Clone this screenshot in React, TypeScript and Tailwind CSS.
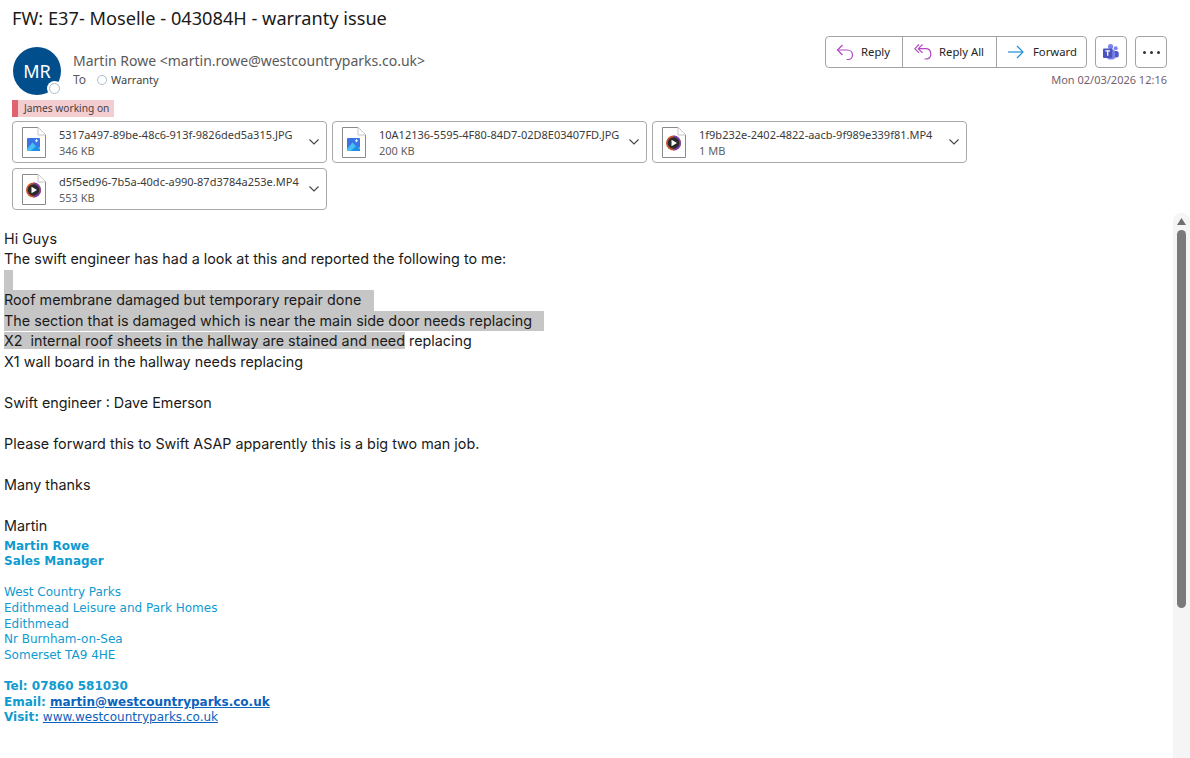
import React from "react";

const ui = "font-['Noto_Sans',sans-serif]";

function ReplyIcon() {
  return (
    <svg width="18" height="18" viewBox="0 0 18 18" fill="none" stroke="#b146c2" strokeWidth="1.2">
      <path d="M6.5 2 L1.5 7 L6.5 12" />
      <path d="M1.5 7 H11 C14.5 7 16.5 9.3 16.5 12 C16.5 14.7 14.5 16.5 12 16.5 H10.5" />
    </svg>
  );
}
function ReplyAllIcon() {
  return (
    <svg width="18" height="18" viewBox="0 0 18 18" fill="none" stroke="#b146c2" strokeWidth="1.2">
      <path d="M5 1.5 L0.8 5.7 L5 9.9" />
      <path d="M8.5 1.5 L4.3 5.7 L8.5 9.9" />
      <path d="M4.3 5.7 H11.5 C14.8 5.7 16.8 8 16.8 11 C16.8 14 14.8 16 12 16 H10.5" />
    </svg>
  );
}
function ForwardIcon() {
  return (
    <svg width="16" height="14" viewBox="0 0 16 14" fill="none" stroke="#1e8fd5" strokeWidth="1.2">
      <path d="M0 7 H15" />
      <path d="M9 1 L15 7 L9 13" />
    </svg>
  );
}
function TeamsIcon() {
  return (
    <svg width="16" height="16" viewBox="0 0 16 16">
      <circle cx="12.7" cy="4.2" r="2" fill="#7b83eb" />
      <rect x="9.5" y="7" width="6.2" height="6.6" rx="2.2" fill="#5059c9" />
      <circle cx="7.6" cy="2.6" r="2.6" fill="#7b83eb" />
      <rect x="4" y="5.5" width="8" height="10" rx="2.5" fill="#7b83eb" />
      <rect x="0" y="4.6" width="9.4" height="9.4" rx="1" fill="#4b53bc" />
      <path d="M2.4 6.9 H7 M4.7 6.9 V11.8" stroke="#fff" strokeWidth="1.3" fill="none" />
    </svg>
  );
}
function FileShell({ children }: { children: React.ReactNode }) {
  return (
    <svg width="24" height="31" viewBox="0 0 24 31" fill="none" className="shrink-0">
      <path d="M1 .5 H16 L23.5 8 V30.5 H.5 V.5 Z" fill="#fff" stroke="#8a8a8a" />
      <path d="M16 .5 V8 H23.5" fill="#fff" stroke="#c4c4c4" />
      {children}
    </svg>
  );
}
function ImageFile() {
  return (
    <FileShell>
      <rect x="5" y="11" width="13" height="13" rx="1" fill="#3b74e4" />
      <path d="M5 22 L10.5 15.5 L16 21 L18 19.5 V24 H5 Z" fill="#45c0f5" />
      <path d="M9 24 L14 19 L18 22.5 V24 Z" fill="#1f8fe6" />
      <path d="M14.5 12.2 V15.2 M13 13.7 H16" stroke="#e6f6ff" strokeWidth="1" />
    </FileShell>
  );
}
function VideoFile() {
  return (
    <FileShell>
      <circle cx="11.5" cy="16" r="7.5" fill="#c8552a" />
      <path d="M11.5 8.5 A7.5 7.5 0 0 1 11.5 23.5 Z" fill="#7a3fa8" />
      <circle cx="11.5" cy="16" r="5.8" fill="#2a2a2a" />
      <path d="M9.5 12.8 L15 16 L9.5 19.2 Z" fill="#fff" />
    </FileShell>
  );
}

function Attachment({ name, size, kind }: { name: string; size: string; kind: "img" | "vid" }) {
  return (
    <div className="w-[315px] h-[42px] flex items-center border border-[#a9a9a9] rounded-[4px] pl-[9px] pr-[7px] bg-white">
      {kind === "img" ? <ImageFile /> : <VideoFile />}
      <div className="ml-[13px] mt-[1px] flex-1 min-w-0 leading-[16px] text-[11px]">
        <div className="text-[#3b3b3b] whitespace-nowrap">{name}</div>
        <div className="text-[#616161]">{size}</div>
      </div>
      <svg width="10" height="6" viewBox="0 0 10 6" fill="none" stroke="#444" strokeWidth="1.1" className="shrink-0 ml-1">
        <path d="M.5 .5 L5 5 L9.5 .5" />
      </svg>
    </div>
  );
}

function Btn({ icon, label, cls }: { icon: React.ReactNode; label: string; cls: string }) {
  return (
    <div className={`h-full flex items-center ${cls}`}>
      {icon}
      <span className="text-[11.3px] text-[#242424]">{label}</span>
    </div>
  );
}

const Line = ({ children }: { children?: React.ReactNode }) => <div className="h-[20.5px] whitespace-pre">{children}</div>;

export default function App() {
  return (
    <div className={`w-[1190px] h-[758px] overflow-hidden bg-white flex flex-col ${ui}`}>
      <div className="pl-[12px] pt-[6px] h-[36px] text-[18.2px] leading-[24px] text-[#1a1a1a]">FW: E37- Moselle - 043084H - warranty issue</div>

      <div className="flex justify-between pr-[23px] h-[64px]">
        <div className="flex pl-[13px] pt-[11px]">
          <div className="relative w-[48px] h-[48px] rounded-full bg-[#004e8c] flex items-center justify-center text-white text-[18px]">
            MR
            <div className="absolute right-[-1px] bottom-[-1px] w-[15px] h-[15px] rounded-full bg-white flex items-center justify-center">
              <div className="w-[11px] h-[11px] rounded-full border border-[#a8c0cf]" />
            </div>
          </div>
          <div className="ml-[12px]">
            <div className="text-[14px] leading-[20px] mt-[4px] text-[#5a5a5a]">Martin Rowe &lt;martin.rowe@westcountryparks.co.uk&gt;</div>
            <div className="flex items-center text-[12px] leading-[16px] mt-[1px] text-[#5a5a5a]">
              <span>To</span>
              <span className="ml-[11px] w-[10px] h-[10px] rounded-full border border-[#a8c0cf]" />
              <span className="ml-[4px] text-[11px] text-[#424242]">Warranty</span>
            </div>
          </div>
        </div>
        <div className="flex flex-col items-end">
          <div className="flex gap-[8px] h-[32px]">
            <div className="flex h-full border border-[#a3a3a3] rounded-[4px] divide-x divide-[#a3a3a3]">
              <Btn icon={<ReplyIcon />} label="Reply" cls="w-[77px] pl-[10px] gap-[7px]" />
              <Btn icon={<ReplyAllIcon />} label="Reply All" cls="w-[94px] pl-[11px] gap-[7px]" />
              <Btn icon={<ForwardIcon />} label="Forward" cls="w-[89px] pl-[11px] gap-[9px]" />
            </div>
            <div className="w-[32px] h-full border border-[#a3a3a3] rounded-[4px] flex items-center justify-center">
              <TeamsIcon />
            </div>
            <div className="w-[32px] h-full border border-[#a3a3a3] rounded-[4px] flex items-center justify-center gap-[4px]">
              <span className="w-[3px] h-[3px] rounded-full bg-[#333]" />
              <span className="w-[3px] h-[3px] rounded-full bg-[#333]" />
              <span className="w-[3px] h-[3px] rounded-full bg-[#333]" />
            </div>
          </div>
          <div className="text-[11px] leading-[16px] mt-[4px] text-[#735f70]">Mon 02/03/2026 12:16</div>
        </div>
      </div>

      <div className="pl-[12px] h-[21px]">
        <div className="w-fit h-[17px] flex bg-[#f4cdd1] text-[10.2px] leading-[17px] text-[#424242]">
          <div className="w-[6px] bg-[#e0636f]" />
          <div className="pl-[6px] pr-[5px]">James working on</div>
        </div>
      </div>

      <div className="pl-[12px] w-[970px] flex flex-wrap content-start gap-[5px] h-[92px]">
        <Attachment name="5317a497-89be-48c6-913f-9826ded5a315.JPG" size="346 KB" kind="img" />
        <Attachment name="10A12136-5595-4F80-84D7-02D8E03407FD.JPG" size="200 KB" kind="img" />
        <Attachment name="1f9b232e-2402-4822-aacb-9f989e339f81.MP4" size="1 MB" kind="vid" />
        <Attachment name="d5f5ed96-7b5a-40dc-a990-87d3784a253e.MP4" size="553 KB" kind="vid" />
      </div>

      <div className="flex-1 min-h-0 flex">
        <div className="flex-1 min-w-0 pl-[4px] pt-[15.75px]">
          <div className="font-['Inter',sans-serif] text-[14.35px] leading-[20.5px] text-[#1a1a1a]">
            <Line>Hi Guys</Line>
            <Line>The swift engineer has had a look at this and reported the following to me:</Line>
            <Line><div className="w-[9px] h-full bg-[#c6c6c6]" /></Line>
            <div className="w-[370px] bg-[#c6c6c6]"><Line>Roof membrane damaged but temporary repair done</Line></div>
            <div className="w-[540px] bg-[#c6c6c6]"><Line>The section that is damaged which is near the main side door needs replacing</Line></div>
            <Line><span className="bg-[#c6c6c6]">X2  internal roof sheets in the hallway are stained and need</span> replacing</Line>
            <Line>X1 wall board in the hallway needs replacing</Line>
            <Line />
            <Line>Swift engineer : Dave Emerson</Line>
            <Line />
            <Line>Please forward this to Swift ASAP apparently this is a big two man job.</Line>
            <Line />
            <Line>Many thanks</Line>
            <Line />
            <Line>Martin</Line>
          </div>
          <div className="font-['DejaVu_Sans',sans-serif] text-[12px] text-[#0f9bd0] mt-[2.45px] leading-[15.6px]">
            <div className="font-bold">Martin Rowe</div>
            <div className="font-bold">Sales Manager</div>
            <div className="h-[15.6px]" />
            <div>West Country Parks</div>
            <div>Edithmead Leisure and Park Homes</div>
            <div>Edithmead</div>
            <div>Nr Burnham-on-Sea</div>
            <div>Somerset TA9 4HE</div>
            <div className="h-[15.6px]" />
            <div className="font-bold">Tel: 07860 581030</div>
            <div className="font-bold">Email: <span className="underline text-[#0b62bd]">martin@westcountryparks.co.uk</span></div>
            <div><span className="font-bold">Visit:</span> <span className="underline text-[#0b62bd]">www.westcountryparks.co.uk</span></div>
          </div>
        </div>
        <div className="w-[17px] shrink-0 bg-[#f5f5f5] rounded-t-[8px] flex flex-col items-center pt-[5px]">
          <svg width="9" height="7" viewBox="0 0 9 7" className="shrink-0">
            <path d="M4.5 0 L9 7 H0 Z" fill="#6f6f6f" />
          </svg>
          <div className="w-[9px] h-[378px] mt-[5px] bg-[#7a7a7a] rounded-[4.5px]" />
        </div>
      </div>
    </div>
  );
}
